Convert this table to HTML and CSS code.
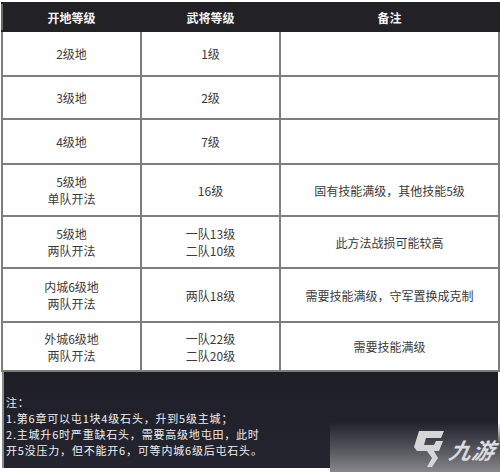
FILE: index.html
```html
<!DOCTYPE html>
<html lang="zh">
<head>
<meta charset="utf-8">
<link rel="stylesheet" href="styles.css">
</head>
<body>
<div class="page">
  <table class="grid">
    <colgroup><col class="c1"><col class="c2"><col class="c3"></colgroup>
    <thead>
      <tr class="head"><th>开地等级</th><th>武将等级</th><th>备注</th></tr>
    </thead>
    <tbody>
      <tr class="r1"><td>2级地</td><td>1级</td><td></td></tr>
      <tr class="r2"><td>3级地</td><td>2级</td><td></td></tr>
      <tr class="r3"><td>4级地</td><td>7级</td><td></td></tr>
      <tr class="r4"><td>5级地<br>单队开法</td><td>16级</td><td>固有技能满级，其他技能5级</td></tr>
      <tr class="r5"><td>5级地<br>两队开法</td><td>一队13级<br>二队10级</td><td>此方法战损可能较高</td></tr>
      <tr class="r6"><td>内城6级地<br>两队开法</td><td>两队18级</td><td>需要技能满级，守军置换成克制</td></tr>
      <tr class="r7"><td>外城6级地<br>两队开法</td><td>一队22级<br>二队20级</td><td>需要技能满级</td></tr>
    </tbody>
  </table>
  <div class="notes">
    <p>注：</p>
    <p>1.第6章可以屯1块4级石头，升到5级主城；</p>
    <p>2.主城升6时严重缺石头，需要高级地屯田，此时</p>
    <p>开5没压力，但不能开6，可等内城6级后屯石头。</p>
  </div>
  <div class="brand">
    <svg class="brand-icon" viewBox="0 0 30 36" width="30" height="36" aria-hidden="true">
      <path d="M5 0 H30 L27 7 H12 L10 14 H20 L22 10 H29 L25 20 H20 L24 27 L18 36 H13 L18 27 L13 20 H3 L0 16 Z" fill="#d6d6d8"/>
    </svg>
    <span class="brand-text">九游</span>
  </div>
</div>
</body>
</html>
```

FILE: styles.css
```css
html, body {
  margin: 0;
  padding: 0;
  background: #ffffff;
}
body {
  width: 500px;
  height: 472px;
  overflow: hidden;
  font-family: "Noto Sans CJK SC", "Noto Sans", sans-serif;
}
.page {
  position: relative;
  width: 500px;
  height: 472px;
  padding: 2px 0 0 1px;
  box-sizing: border-box;
}
.grid {
  border-collapse: collapse;
  width: 497px;
  table-layout: fixed;
}
.grid col.c1 { width: 139px; }
.grid col.c2 { width: 139px; }
.grid col.c3 { width: 219px; }
.grid th, .grid td {
  border: 2px solid #7d7d7d;
  text-align: center;
  vertical-align: middle;
  padding: 0;
  font-size: 12px;
  line-height: 17px;
  color: #3a3a3a;
}
.grid th {
  background: #222226;
  color: #f4f4f4;
  font-weight: bold;
  border-color: #222226;
  border-left-color: #6a6a6a;
  height: 26px;
}
.r1 td { height: 43px; }
.r2 td { height: 41px; }
.r3 td { height: 43px; }
.r4 td { height: 50px; }
.r5 td { height: 50px; }
.r6 td { height: 52px; }
.r7 td { height: 47px; }
.notes {
  margin-left: 1px;
  width: 496px;
  height: 96px;
  box-sizing: border-box;
  border-left: 2px solid #8a8a8a;
  background: linear-gradient(180deg, #1d1e26 0%, #24252f 100%);
  padding: 22px 0 0 2px;
  color: #f0f0f0;
  font-size: 11px;
  line-height: 16px;
  letter-spacing: 0.8px;
}
.notes p {
  margin: 0;
  white-space: nowrap;
}
.brand {
  position: absolute;
  right: 0;
  bottom: 0;
  width: 170px;
  height: 50px;
  background: linear-gradient(180deg, rgba(40,41,50,0) 0%, #4a4b53 45%, #86878c 100%);
  display: flex;
  align-items: center;
  justify-content: flex-end;
  gap: 6px;
  padding: 4px 4px 0 0;
  box-sizing: border-box;
}
.brand-icon { display: block; }
.brand-text {
  font-family: "Noto Sans CJK SC", sans-serif;
  font-size: 22px;
  font-weight: bold;
  font-style: italic;
  color: #dcdcde;
  transform: skewX(-12deg);
  letter-spacing: 1px;
}
```
